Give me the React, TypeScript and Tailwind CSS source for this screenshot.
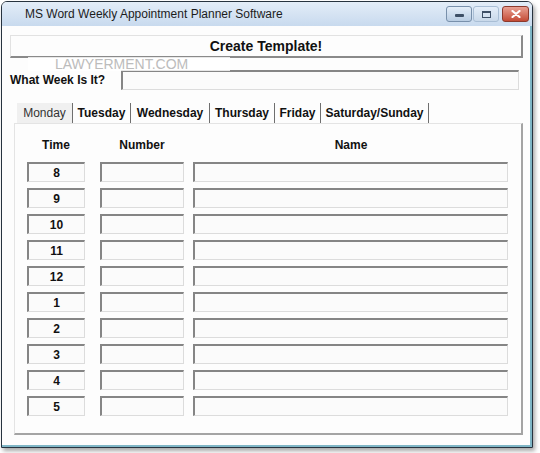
import React from 'react'

const times = ['8', '9', '10', '11', '12', '1', '2', '3', '4', '5']
const tabs = [
  { label: 'Monday', w: 'w-[56px]' },
  { label: 'Tuesday', w: 'w-[58px]' },
  { label: 'Wednesday', w: 'w-[79px]' },
  { label: 'Thursday', w: 'w-[65px]' },
  { label: 'Friday', w: 'w-[46px]' },
  { label: 'Saturday/Sunday', w: 'w-[108px]' },
]

const field =
  'h-[20px] border-t-2 border-l-2 border-t-[#858585] border-l-[#858585] border-b border-r border-b-[#dcdcdc] border-r-[#dcdcdc] bg-[#fbfbfb]'

export default function App() {
  return (
    <div className="relative w-[540px] h-[453px] bg-white overflow-hidden" style={{ fontFamily: '"Liberation Sans", Arial, sans-serif' }}>
      {/* window */}
      <div className="ml-[1px] mt-[1px] w-[532px] h-[447px] flex flex-col border border-[#27333f] rounded-t-[6px] overflow-hidden shadow-[2px_3px_4px_rgba(0,0,0,0.35)]">
        {/* title bar */}
        <div className="h-[24px] flex items-center bg-gradient-to-b from-[#e3edf8] to-[#c8daee] pl-[23px] pr-[3px]">
          <span className="text-[12px] text-[#1c1c1c]">MS Word Weekly Appointment Planner Software</span>
          <div className="ml-auto flex items-center gap-[1px]">
            <div className="w-[26px] h-[16px] rounded-[3px] border border-[#7890ab] bg-gradient-to-b from-[#e4eef9] to-[#b9cde3] flex items-end justify-center pb-[4px]">
              <div className="w-[9px] h-[3px] bg-[#3d4f66] rounded-[1px]" />
            </div>
            <div className="w-[26px] h-[16px] rounded-[3px] border border-[#a9bed5] bg-gradient-to-b from-[#e4eef9] to-[#c9d9ea] flex items-center justify-center">
              <div className="w-[9px] h-[7px] border border-[#3d4f66] border-t-2" />
            </div>
            <div className="ml-[2px] w-[27px] h-[16px] rounded-[3px] border border-[#8c3a2d] bg-gradient-to-b from-[#e8a093] to-[#c34a35] flex items-center justify-center">
              <svg width="10" height="8" viewBox="0 0 10 8">
                <path d="M1.5 1 L8.5 7 M8.5 1 L1.5 7" stroke="#fff" strokeWidth="2.2" strokeLinecap="round" />
              </svg>
            </div>
          </div>
        </div>

        {/* client */}
        <div className="flex-1 flex flex-col bg-[#fdfdfd] border-r-2 border-b-2 border-[#7fb6c6] pl-[8px] pr-[7px] pt-[9px]">
          <button className="h-[23px] w-full border-t border-l border-[#e2e2e2] border-b-2 border-r-2 border-b-[#8a8a8a] border-r-[#8a8a8a] bg-[#fdfdfd] text-[14px] font-bold text-[#111]">
            Create Template!
          </button>

          <div className="mt-[12px] flex items-center">
            <span className="w-[111px] text-[12px] font-bold text-[#111]">What Week Is It?</span>
            <div className={field + ' flex-1 mr-[4px]'} />
          </div>

          {/* tabs */}
          <div className="mt-[13px] ml-[7px] flex h-[20px]">
            {tabs.map((t, i) => (
              <div
                key={t.label}
                className={
                  t.w +
                  ' flex items-center justify-center border-r border-r-[#6f6f6f] text-[12px] ' +
                  (i === 0 ? 'bg-[#f0f0f0] text-[#333] font-normal' : 'font-bold text-[#111]')
                }
              >
                {t.label}
              </div>
            ))}
          </div>

          {/* panel */}
          <div className="ml-[4px] h-[312px] bg-[#fdfdfd] border-t border-l border-[#e4e4e4] border-b-2 border-r-2 border-b-[#a4a4a4] border-r-[#a4a4a4] pl-[12px] pr-[12px] pt-[14px]">
            <div className="flex text-[12px] font-bold text-[#111] h-[14px] items-center">
              <div className="w-[58px] text-center">Time</div>
              <div className="ml-[15px] w-[84px] text-center">Number</div>
              <div className="ml-[9px] flex-1 text-center">Name</div>
            </div>
            <div className="mt-[10px] flex flex-col gap-[6px]">
              {times.map((t) => (
                <div key={t} className="flex">
                  <div className={field + ' w-[58px] flex items-center justify-center text-[12px] font-bold text-[#111]'}>{t}</div>
                  <div className={field + ' ml-[15px] w-[84px]'} />
                  <div className={field + ' ml-[9px] w-[315px]'} />
                </div>
              ))}
            </div>
          </div>
        </div>
      </div>

      {/* watermark */}
      <div className="absolute left-[28px] top-[57px] w-[202px] h-[14px] bg-white/80 flex items-center">
        <span className="ml-[27px] text-[14px] leading-none text-[#bcbcbc]">LAWYERMENT.COM</span>
      </div>
    </div>
  )
}
